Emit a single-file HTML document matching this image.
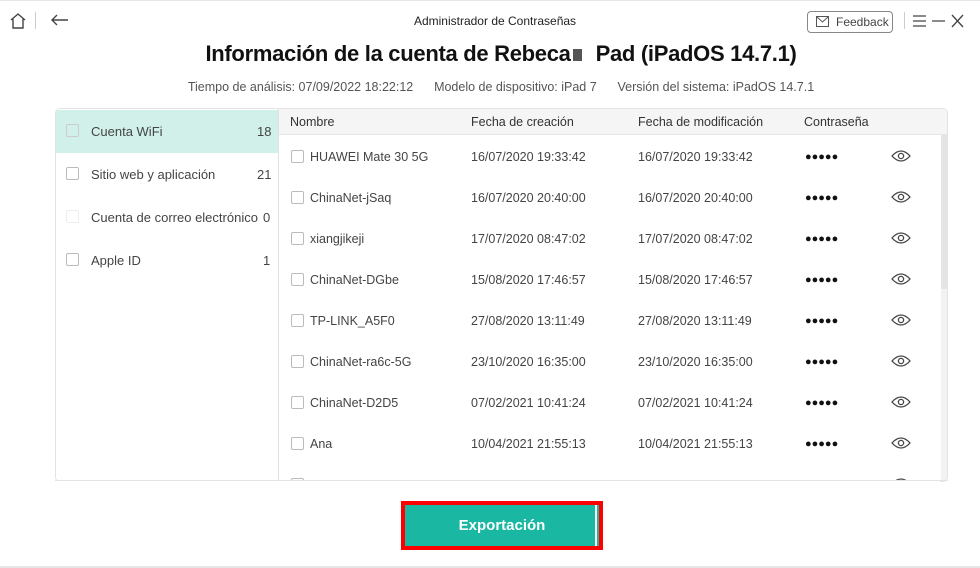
<!DOCTYPE html>
<html><head><meta charset="utf-8"><style>
*{margin:0;padding:0;box-sizing:border-box}
body{width:980px;height:568px;background:#fff;font-family:"Liberation Sans",sans-serif;position:relative;overflow:hidden;color:#333}
.abs{position:absolute}
.cb{position:absolute;width:13px;height:13px;border:1px solid #bbb;border-radius:2px;background:#fff}
.side{font-size:13px;color:#444}
.row{position:absolute;left:278px;width:662px;height:41px;font-size:12.5px;color:#444}
.row span{position:absolute;top:14px}
.dots{font-size:11px;letter-spacing:0px;color:#111}
</style></head><body>
<div class="abs" style="left:0;top:0;width:980px;height:1px;background:#e6e6e6"></div>
<svg class="abs" style="left:9px;top:12px" width="18" height="18" viewBox="0 0 18 18"><path d="M2 8 L9 2 L16 8 M4 7 V16 H14 V7" fill="none" stroke="#444" stroke-width="1.4"/></svg>
<div class="abs" style="left:35px;top:12px;width:1px;height:17px;background:#ccc"></div>
<svg class="abs" style="left:51px;top:13px" width="18" height="14" viewBox="0 0 18 14"><path d="M1 7 H17 M6 2 L1 7 L6 12" fill="none" stroke="#444" stroke-width="1.4"/></svg>
<div class="abs" style="left:0;width:990px;top:14px;text-align:center;font-size:12px;color:#222">Administrador de Contraseñas</div>
<div class="abs" style="left:807px;top:11px;width:86px;height:22px;border:1px solid #888;border-radius:4px;font-size:12px;color:#444;padding:3px 0 0 28px">Feedback</div>
<svg class="abs" style="left:816px;top:16px" width="13" height="11" viewBox="0 0 13 11"><rect x="0.5" y="0.5" width="12" height="10" fill="none" stroke="#555"/><path d="M1 1 L6.5 6 L12 1" fill="none" stroke="#555"/></svg>
<div class="abs" style="left:904px;top:12px;width:1px;height:17px;background:#ccc"></div>
<svg class="abs" style="left:912px;top:14px" width="60" height="14" viewBox="0 0 60 14"><path d="M1 2H14M1 7H14M1 12H14M20 7H33M40 1L51 13M51 1L40 13" fill="none" stroke="#444" stroke-width="1.3"/></svg>
<div class="abs" style="left:0;width:1002px;top:41px;text-align:center;font-size:22px;font-weight:bold;color:#111;letter-spacing:-0.3px">Información de la cuenta de Rebeca<span style="display:inline-block;width:9px;height:12px;background:#555;margin:0 14px 0 2px"></span>Pad (iPadOS 14.7.1)</div>
<div class="abs" style="left:0;width:1002px;top:80px;text-align:center;font-size:12.5px;color:#555">Tiempo de análisis: 07/09/2022 18:22:12&nbsp;&nbsp;&nbsp;&nbsp;&nbsp;&nbsp;Modelo de dispositivo: iPad 7&nbsp;&nbsp;&nbsp;&nbsp;&nbsp;&nbsp;Versión del sistema: iPadOS 14.7.1</div>

<div class="abs" style="left:55px;top:108px;width:893px;height:374px;border:1px solid #e3e3e3;border-radius:5px;overflow:hidden">
 <div class="abs" style="left:0;top:1px;width:222px;height:43px;background:#d2f0ea"></div>
 <div class="abs" style="left:222px;top:0;width:1px;height:374px;background:#e3e3e3"></div>
 <div class="abs" style="left:223px;top:0;width:670px;height:26px;background:#f5f5f5;border-bottom:1px solid #e6e6e6"></div>
 <div class="abs" style="left:885px;top:26px;width:7px;height:348px;background:#f2f2f2"></div>
 <div class="abs" style="left:885px;top:26px;width:7px;height:154px;background:#e4e4e4"></div>
</div>
<div class="cb" style="left:66px;top:124px;border-color:#ccc;background:transparent"></div><div class="abs side" style="left:91px;top:124px">Cuenta WiFi</div><div class="abs side" style="left:257px;top:124px">18</div>
<div class="cb" style="left:66px;top:167px"></div><div class="abs side" style="left:91px;top:167px">Sitio web y aplicación</div><div class="abs side" style="left:257px;top:167px">21</div>
<div class="cb" style="left:66px;top:210px;border-color:#eee"></div><div class="abs side" style="left:91px;top:210px">Cuenta de correo electrónico</div><div class="abs side" style="left:263px;top:210px">0</div>
<div class="cb" style="left:66px;top:253px"></div><div class="abs side" style="left:91px;top:253px">Apple ID</div><div class="abs side" style="left:263px;top:253px">1</div>

<div class="abs" style="left:290px;top:115px;font-size:12.5px;color:#333">Nombre</div>
<div class="abs" style="left:471px;top:115px;font-size:12.5px;color:#333">Fecha de creación</div>
<div class="abs" style="left:638px;top:115px;font-size:12.5px;color:#333">Fecha de modificación</div>
<div class="abs" style="left:804px;top:115px;font-size:12.5px;color:#333">Contraseña</div>

<div id="rows"></div>
<script>
var d=[["HUAWEI Mate 30 5G","16/07/2020 19:33:42","16/07/2020 19:33:42"],["ChinaNet-jSaq","16/07/2020 20:40:00","16/07/2020 20:40:00"],["xiangjikeji","17/07/2020 08:47:02","17/07/2020 08:47:02"],["ChinaNet-DGbe","15/08/2020 17:46:57","15/08/2020 17:46:57"],["TP-LINK_A5F0","27/08/2020 13:11:49","27/08/2020 13:11:49"],["ChinaNet-ra6c-5G","23/10/2020 16:35:00","23/10/2020 16:35:00"],["ChinaNet-D2D5","07/02/2021 10:41:24","07/02/2021 10:41:24"],["Ana","10/04/2021 21:55:13","10/04/2021 21:55:13"],["","",""]];
var eye='<svg width="20" height="14" viewBox="0 0 20 14"><path d="M1 7 Q10 -3 19 7 Q10 17 1 7Z" fill="none" stroke="#444" stroke-width="1.3"/><circle cx="10" cy="7" r="2.6" fill="none" stroke="#444" stroke-width="1.3"/></svg>';
var h='';
d.forEach(function(r,i){var t=136+i*41;
h+='<div class="row" style="top:'+t+'px"><div class="cb" style="left:13px;top:14px"></div><span style="left:32px">'+r[0]+'</span><span style="left:193px">'+r[1]+'</span><span style="left:360px">'+r[2]+'</span>'+(r[0]?'<span class="dots" style="left:527px;top:15px">●●●●●</span>':'')+'<span style="left:613px;top:13px">'+eye+'</span></div>';});
document.getElementById('rows').innerHTML=h;
</script>
<div class="abs" style="left:56px;top:481px;width:884px;height:20px;background:#fff"></div>
<div class="abs" style="left:55px;top:480px;width:893px;height:1px;background:#e3e3e3"></div>
<div class="abs" style="left:401px;top:501px;width:202px;height:49px;border:4px solid #f00;background:#1ab7a3">
 <div class="abs" style="right:2px;top:0;width:2px;height:41px;background:#fff"></div>
 <div class="abs" style="left:0;width:194px;top:12px;text-align:center;color:#fff;font-weight:bold;font-size:15px">Exportación</div>
</div>
<div class="abs" style="left:0;top:566px;width:980px;height:2px;background:#e6e6e6"></div>
</body></html>
